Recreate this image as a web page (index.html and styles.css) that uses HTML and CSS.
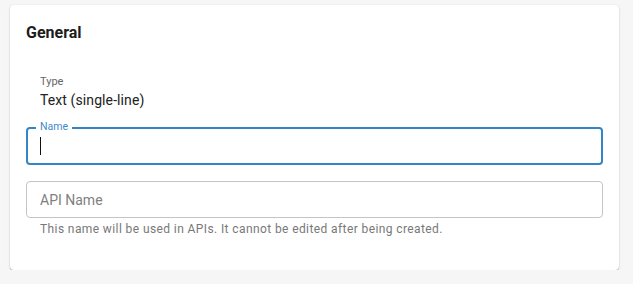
FILE: index.html
```html
<!DOCTYPE html>
<html lang="en">
<head>
<meta charset="utf-8">
<title>General</title>
<link rel="stylesheet" href="styles.css">
</head>
<body>
<main class="page">
  <section class="card">
    <h2 class="card-title">General</h2>
    <div class="readonly">
      <div class="readonly-label">Type</div>
      <div class="readonly-value">Text (single-line)</div>
    </div>
    <div class="field field-focused">
      <span class="field-label">Name</span>
      <div class="field-box"><span class="caret"></span></div>
    </div>
    <div class="field">
      <div class="field-box field-box-plain"><span class="placeholder">API Name</span></div>
      <p class="helper">This name will be used in APIs. It cannot be edited after being created.</p>
    </div>
  </section>
</main>
</body>
</html>
```

FILE: styles.css
```css
* { box-sizing: border-box; }
html, body { margin: 0; padding: 0; }
body {
  background: #f6f6f6;
  font-family: Roboto, "Liberation Sans", Arial, sans-serif;
  color: #1f1f1f;
}
.page {
  padding: 5px 14px 0 10px;
}
.card {
  background: #fff;
  border-radius: 4px;
  height: 265px;
  padding: 16px 16px 0 16px;
  box-shadow: 0 1px 1px 0 rgba(0,0,0,0.22), 0 1px 3px 0 rgba(0,0,0,0.1), 0 0 1px 0 rgba(0,0,0,0.08);
  display: flex;
  flex-direction: column;
}
.card-title {
  margin: 0;
  font-size: 16px;
  line-height: 24px;
  font-weight: 700;
  color: #1c1c1c;
}
.readonly {
  margin-top: 30px;
  padding-left: 14px;
}
.readonly-label {
  font-size: 11px;
  line-height: 14px;
  color: #666;
}
.readonly-value {
  font-size: 14px;
  line-height: 20px;
  margin-top: 0.5px;
  letter-spacing: 0.1px;
  color: #212121;
}
.field {
  position: relative;
}
.field-focused {
  margin-top: 17.5px;
}
.field-box {
  height: 38px;
  border: 2px solid #3385c6;
  border-radius: 4px;
  display: flex;
  align-items: center;
  padding-left: 12px;
}
.field-box-plain {
  margin-top: 16px;
  height: 37px;
  border: 1px solid #c4c4c4;
  padding-left: 13px;
}
.field-label {
  position: absolute;
  left: 10px;
  top: -7px;
  padding: 0 4px;
  background: #fff;
  font-size: 10.5px;
  line-height: 14px;
  color: #3d8ccb;
}
.caret {
  width: 1px;
  height: 18px;
  background: #111;
}
.placeholder {
  font-size: 14px;
  color: #808080;
}
.helper {
  margin: 3px 0 0 0;
  padding-left: 14px;
  font-size: 12px;
  line-height: 16px;
  letter-spacing: 0.4px;
  color: #787878;
}
```
